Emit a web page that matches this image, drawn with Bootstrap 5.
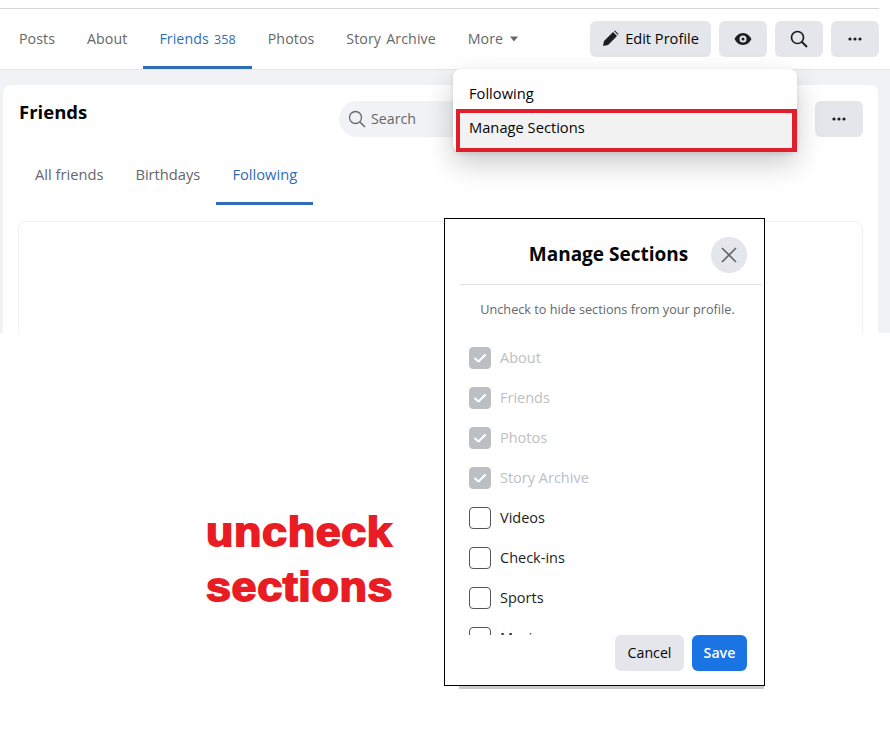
<!DOCTYPE html>
<html lang="en"><head><meta charset="utf-8"><title>Manage Sections</title>
<link href="https://cdn.jsdelivr.net/npm/bootstrap@5.3.0/dist/css/bootstrap.min.css" rel="stylesheet">
<style>
html,body{margin:0;height:747px;overflow:hidden;background:#fff}
body{position:relative;font-family:"Open Sans","Noto Sans",sans-serif;color:#050505;width:890px}
.fb-top{height:333px;background:#f0f2f5;overflow:hidden}
.fb-head{height:70px;background:#fff;padding:8px 11px 0 3px;border-bottom:1px solid #e4e6e9}
.fb-rule{height:1px;background:#d5d6d8;margin:0 -11px 0 -3px;width:879px}
.fb-tabs{height:60px}
.fb-tab{padding:0 16px;height:60px;line-height:59px;font-size:14.2px;font-weight:500;letter-spacing:.08px;word-spacing:1.5px;color:#65676b;white-space:nowrap;text-decoration:none;border-bottom:3px solid transparent}
.fb-tab.on{color:#2f6db8;border-bottom-color:#2f6db8}
.fb-count{font-size:12.5px;font-weight:400}
.fb-caret{display:inline-block;margin-left:6px;vertical-align:2px}
.fb-btn{height:36px;border:0;border-radius:6px;background:#e4e6eb;color:#050505;font-size:14.2px;font-weight:500;padding:0;display:flex;align-items:center;justify-content:center}
.fb-square{width:48px}
.fb-edit{width:121px;gap:6px;font-size:14.6px}
.fb-actions{margin-top:-1px}
.fb-card{margin:15px 12px 0 3px;background:#fff;border-radius:8px 8px 0 0;padding:16px 15px 0 16px;height:260px}
.fb-title{font-size:18.5px;font-weight:700;line-height:22px;color:#050505;margin:0}
.fb-search{width:262px;height:36px;border-radius:18px;background:#f0f2f5;color:#65676b;font-size:14.2px;padding-left:9px;gap:5px;margin-right:214px}
.fb-subtabs{margin-top:10px}
.fb-sub{height:58px;padding:0 16px;line-height:54px;font-size:14.7px;font-weight:500;color:#65676b;border-bottom:3px solid transparent}
.fb-sub.on{color:#2f6db8;border-bottom-color:#2f6db8}
.fb-inner{margin:16px 0 0 -1px;height:200px;border:1px solid #f0f1f2;border-radius:8px;background:#fff}
.fb-menu{position:absolute;left:453px;top:69px;width:344px;height:83px;background:#fff;border-radius:8px;box-shadow:0 12px 28px rgba(0,0,0,.2),0 2px 4px rgba(0,0,0,.1)}
.fb-item{padding-left:16px;font-size:14.7px;color:#050505;font-weight:500}
.fb-item-a{height:40px;line-height:49px}
.fb-item-b{margin-left:3px;padding-left:9px;height:43px;line-height:28px;background:#f2f2f2;border:4px solid #e01f2d;border-right-width:5px}
.fb-note{width:fit-content;padding:171px 0 0 206px;color:#e91c24;font-family:"Liberation Sans",Arial,sans-serif;font-weight:700;font-size:41.5px;line-height:55px;-webkit-text-stroke:1.8px #e91c24;letter-spacing:.6px;transform:scaleX(1.08);transform-origin:206px 0}
.fb-modal{position:absolute;left:444px;top:218px;width:321px;height:468px;background:#fff;border:1px solid #000;display:flex;flex-direction:column;z-index:2}
.fb-under{position:absolute;left:459px;top:685px;width:305px;height:4px;background:#c9c9c9}
.fb-mhead{height:66px;margin-left:14px;margin-right:2px;border-bottom:1px solid #dfe1e4;position:relative}
.fb-mtitle{font-size:19px;font-weight:700;line-height:71px;text-align:center;margin:0;padding-right:4px}
.fb-close{position:absolute;right:15px;top:18px;width:36px;height:36px;border-radius:50%;border:0;background:#e4e6eb;padding:0;display:flex;align-items:center;justify-content:center}
.fb-hint{text-align:center;font-size:12.7px;font-weight:500;color:#65676b;margin:0;line-height:16px;padding:16px 0 0 6px;height:53px}
.fb-list{height:297px;overflow:hidden;padding-left:24px;flex:none}
.fb-check{height:40px;display:flex;align-items:center;gap:9px;margin:0;padding:0;min-height:0}
.fb-check .form-check-input{width:22px;height:22px;margin:0;float:none;flex:none;border:1px solid #555;border-radius:4px;opacity:1;background-color:#fff}
.fb-check .form-check-input:checked{background-color:#bcc0c4;border-color:#bcc0c4;opacity:1;background-size:22px;background-image:url("data:image/svg+xml,%3csvg xmlns='http://www.w3.org/2000/svg' viewBox='0 0 22 22'%3e%3cpath fill='none' stroke='%23fff' stroke-width='2' stroke-linecap='round' stroke-linejoin='round' d='M6 11.500l3.500 3L16 8'/%3e%3c/svg%3e")}
.fb-check .form-check-label{font-size:14.5px;color:#1c1e21;font-weight:500}
.fb-check.off .form-check-input:disabled~.form-check-label{color:#bcc0c4;font-weight:500;opacity:1}
.fb-foot{position:absolute;right:17px;bottom:14px;gap:8px}
.fb-cancel{width:69px}
.fb-save{width:55px;background:#1b74e4;color:#fff;font-weight:600}
</style></head>
<body>
<div class="fb-top">
  <header class="fb-head">
    <div class="fb-rule"></div>
    <div class="d-flex align-items-center justify-content-between fb-tabs">
      <nav class="d-flex">
        <a class="fb-tab">Posts</a><a class="fb-tab">About</a>
        <a class="fb-tab on">Friends <span class="fb-count">358</span></a>
        <a class="fb-tab">Photos</a><a class="fb-tab">Story Archive</a>
        <a class="fb-tab">More<svg class="fb-caret" width="10" height="6" viewBox="0 0 10 6"><path d="M1 .5h8L5 5.500z" fill="#65676b"/></svg></a>
      </nav>
      <div class="d-flex gap-2 fb-actions">
        <button class="fb-btn fb-edit"><svg width="17" height="17" viewBox="0 0 17 17"><path d="M1 16l1-5L11 2l4 4-9 9zM12 1l1-.5 3.500 3.500-.5 1z" fill="#1c1e21"/></svg>Edit Profile</button>
        <button class="fb-btn fb-square" aria-label="View"><svg width="18" height="14" viewBox="0 0 18 14"><path fill-rule="evenodd" d="M9 1c4 0 7 3 8.500 6C16 10 13 13 9 13S2 10 .5 7C2 4 5 1 9 1zm0 2.500a3.500 3.500 0 100 7 3.500 3.500 0 000-7zm0 2a1.500 1.500 0 110 3 1.500 1.500 0 010-3z" fill="#1c1e21"/></svg></button>
        <button class="fb-btn fb-square" aria-label="Search"><svg width="18" height="18" viewBox="0 0 18 18"><circle cx="7.500" cy="7.500" r="6" fill="none" stroke="#1c1e21" stroke-width="1.700"/><path d="M12 12l5 5" stroke="#1c1e21" stroke-width="2"/></svg></button>
        <button class="fb-btn fb-square" aria-label="More"><svg width="14" height="4" viewBox="0 0 14 4"><circle cx="2" cy="2" r="1.600" fill="#1c1e21"/><circle cx="7" cy="2" r="1.600" fill="#1c1e21"/><circle cx="12" cy="2" r="1.600" fill="#1c1e21"/></svg></button>
      </div>
    </div>
  </header>
  <section class="fb-card">
    <div class="d-flex align-items-start justify-content-between">
      <h2 class="fb-title">Friends</h2>
      <div class="d-flex">
        <div class="fb-search d-flex align-items-center"><svg width="18" height="18" viewBox="0 0 18 18"><circle cx="7.500" cy="7.500" r="6" fill="none" stroke="#65676b" stroke-width="1.300"/><path d="M12 12l5 5" stroke="#65676b" stroke-width="1.500"/></svg>Search</div>
        <button class="fb-btn fb-square" aria-label="More"><svg width="14" height="4" viewBox="0 0 14 4"><circle cx="2" cy="2" r="1.600" fill="#1c1e21"/><circle cx="7" cy="2" r="1.600" fill="#1c1e21"/><circle cx="12" cy="2" r="1.600" fill="#1c1e21"/></svg></button>
      </div>
    </div>
    <div class="d-flex fb-subtabs">
      <div class="fb-sub">All friends</div><div class="fb-sub">Birthdays</div><div class="fb-sub on">Following</div>
    </div>
    <div class="fb-inner"></div>
  </section>
</div>
<div class="fb-note">uncheck<br>sections</div>
<div class="fb-menu">
  <div class="fb-item fb-item-a">Following</div>
  <div class="fb-item fb-item-b">Manage Sections</div>
</div>
<div class="fb-under"></div>
<div class="fb-modal">
  <div class="fb-mhead">
    <h3 class="fb-mtitle">Manage Sections</h3>
    <button class="fb-close" aria-label="Close"><svg width="16" height="16" viewBox="0 0 16 16"><path d="M1 1l14 14M15 1L1 15" stroke="#606770" stroke-width="1.700"/></svg></button>
  </div>
  <p class="fb-hint">Uncheck to hide sections from your profile.</p>
  <div class="fb-list">
    <div class="form-check fb-check off"><input class="form-check-input" type="checkbox" checked disabled id="c1"><label class="form-check-label" for="c1">About</label></div>
    <div class="form-check fb-check off"><input class="form-check-input" type="checkbox" checked disabled id="c2"><label class="form-check-label" for="c2">Friends</label></div>
    <div class="form-check fb-check off"><input class="form-check-input" type="checkbox" checked disabled id="c3"><label class="form-check-label" for="c3">Photos</label></div>
    <div class="form-check fb-check off"><input class="form-check-input" type="checkbox" checked disabled id="c4"><label class="form-check-label" for="c4">Story Archive</label></div>
    <div class="form-check fb-check"><input class="form-check-input" type="checkbox" id="c5"><label class="form-check-label" for="c5">Videos</label></div>
    <div class="form-check fb-check"><input class="form-check-input" type="checkbox" id="c6"><label class="form-check-label" for="c6">Check-ins</label></div>
    <div class="form-check fb-check"><input class="form-check-input" type="checkbox" id="c7"><label class="form-check-label" for="c7">Sports</label></div>
    <div class="form-check fb-check"><input class="form-check-input" type="checkbox" id="c8"><label class="form-check-label" for="c8">Music</label></div>
  </div>
  <div class="d-flex fb-foot">
    <button class="fb-btn fb-cancel">Cancel</button>
    <button class="fb-btn fb-save">Save</button>
  </div>
</div>
</body></html>
